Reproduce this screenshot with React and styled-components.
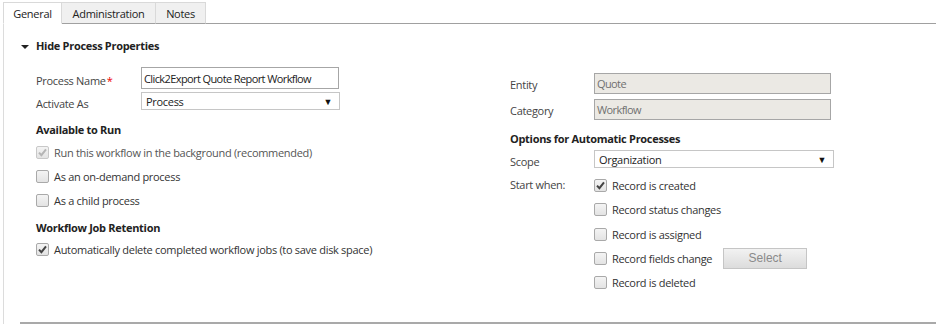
import React from "react";
import styled, { createGlobalStyle } from "styled-components";

const Global = createGlobalStyle`
  html, body { margin: 0; padding: 0; background: #fff; }
  body {
    font-family: "Segoe UI", "Open Sans", sans-serif;
    font-size: 11px;
    letter-spacing: -0.3px;
    color: #444;
  }
  * { box-sizing: border-box; }
`;

const Page = styled.div`
  width: 936px;
  height: 324px;
  position: relative;
  overflow: hidden;
`;

const TabBar = styled.div`
  display: flex;
  align-items: flex-end;
  height: 24px;
  padding-left: 3px;
  padding-top: 2px;
`;

const Tab = styled.div`
  height: 22px;
  display: flex;
  align-items: center;
  justify-content: center;
  color: #222;
  background: ${p => (p.$active ? "#fff" : "#f0f0f0")};
  border: 1px solid #d9d9d9;
  border-left: ${p => (p.$first ? "1px solid #d9d9d9" : "none")};
  border-bottom: ${p => (p.$active ? "1px solid #fff" : "1px solid #a0a0a0")};
  width: ${p => p.$w}px;
`;

const TabFill = styled.div`
  flex: 1;
  height: 1px;
  background: #a0a0a0;
`;

const Body = styled.div`
  border-left: 1px solid #dcdcdc;
  margin-left: 3px;
  height: 300px;
  position: relative;
`;

const SectionHead = styled.div`
  display: flex;
  align-items: center;
  gap: 7px;
  padding: 10px 0 0 17px;
  height: 33px;
  font-weight: bold;
  color: #222;
`;

const Caret = styled.span`
  width: 0;
  height: 0;
  border-left: 4px solid transparent;
  border-right: 4px solid transparent;
  border-top: 4px solid #222;
  margin-top: 2px;
`;

const Columns = styled.div`
  display: grid;
  grid-template-columns: 474px 1fr;
  padding-left: 32px;
`;

const Col = styled.div`
  display: flex;
  flex-direction: column;
  padding-top: ${p => p.$pt}px;
`;

const FieldRow = styled.div`
  display: flex;
  align-items: ${p => p.$align || "center"};
  height: ${p => (p.$h ? `${p.$h}px` : "auto")};
  margin-top: ${p => p.$mt || 0}px;
`;

const Label = styled.div`
  width: ${p => p.$w}px;
  flex: none;
  color: #444;
  padding-top: ${p => p.$pt || 0}px;
`;

const Req = styled.span`
  color: #e00;
  margin-left: 1px;
`;

const TextBox = styled.div`
  width: ${p => p.$w}px;
  height: ${p => p.$h}px;
  margin-top: ${p => p.$mt || 0}px;
  border: 1px solid #a6a6a6;
  background: ${p => (p.$ro ? "#ebe9e4" : "#fff")};
  color: ${p => (p.$ro ? "#707070" : "#222")};
  padding: 0 2px;
  display: flex;
  align-items: center;
  white-space: nowrap;
  overflow: hidden;
  font-size: 11px;
  letter-spacing: -0.6px;
`;

const Select = styled.div`
  width: ${p => p.$w}px;
  height: 18px;
  margin-top: ${p => p.$mt || 0}px;
  border: 1px solid #c6c6c6;
  background: #fff;
  color: #222;
  padding: 0 4px;
  display: flex;
  align-items: center;
  justify-content: space-between;
  font-size: 11px;
`;

const Arrow = styled.span`
  font-size: 9px;
  color: #111;
  margin-right: 3px;
`;

const SubHead = styled.div`
  font-weight: bold;
  color: #222;
  height: 22px;
  margin-top: ${p => p.$mt}px;
  display: flex;
  align-items: center;
`;

const CheckRow = styled.div`
  display: flex;
  align-items: center;
  gap: 5px;
  height: ${p => p.$h || 24}px;
  white-space: nowrap;
  color: ${p => (p.$muted ? "#555" : "#333")};
`;

const Box = styled.span`
  width: 13px;
  height: 13px;
  border: 1px solid ${p => (p.$dis ? "#c8c8c8" : "#a9a9a9")};
  border-radius: 2px;
  background: linear-gradient(#f4f4f4, #e3e3e3);
  display: inline-flex;
  align-items: center;
  justify-content: center;
  flex: none;
`;

const Button = styled.div`
  width: 84px;
  height: 21px;
  margin-left: 6px;
  border: 1px solid #c5c5c5;
  background: linear-gradient(#f2f2f2, #dcdcdc);
  color: #8a8a8a;
  display: flex;
  align-items: center;
  justify-content: center;
  font-family: "Liberation Sans", Arial, sans-serif;
  letter-spacing: 0;
  font-size: 12px;
`;

const BottomLine = styled.div`
  position: absolute;
  left: 16px;
  right: 0;
  bottom: 0;
  height: 2px;
  background: #a9a9a9;
`;

function Check({ checked, disabled }) {
  return (
    <Box $dis={disabled}>
      {checked && (
        <svg width="9" height="9" viewBox="0 0 9 9">
          <path
            d="M1 4.6 L3.4 7.2 L8 1.4"
            fill="none"
            stroke={disabled ? "#b5b5b5" : "#444"}
            strokeWidth="2"
          />
        </svg>
      )}
    </Box>
  );
}

const Item = ({ checked, disabled, children, h, muted }) => (
  <CheckRow $h={h} $muted={muted}>
    <Check checked={checked} disabled={disabled} />
    <span>{children}</span>
  </CheckRow>
);

export default function App() {
  return (
    <Page>
      <Global />
      <TabBar>
        <Tab $active $first $w={59}>General</Tab>
        <Tab $w={94}>Administration</Tab>
        <Tab $w={50}>Notes</Tab>
        <TabFill />
      </TabBar>
      <Body>
        <SectionHead>
          <Caret />
          Hide Process Properties
        </SectionHead>
        <Columns>
          <Col $pt={9}>
            <FieldRow $h={24}>
              <Label $w={105} $pt={4}>Process Name<Req>*</Req></Label>
              <TextBox $w={198} $h={22}>Click2Export Quote Report Workflow</TextBox>
            </FieldRow>
            <FieldRow $h={22}>
              <Label $w={105} $pt={4}>Activate As</Label>
              <Select $w={199}>
                <span>Process</span>
                <Arrow>▼</Arrow>
              </Select>
            </FieldRow>
            <SubHead $mt={6}>Available to Run</SubHead>
            <Item checked disabled muted>Run this workflow in the background (recommended)</Item>
            <Item>As an on-demand process</Item>
            <Item>As a child process</Item>
            <SubHead $mt={4}>Workflow Job Retention</SubHead>
            <Item checked h={22}>Automatically delete completed workflow jobs (to save disk space)</Item>
          </Col>
          <Col $pt={14}>
            <FieldRow $h={26} $align="flex-start">
              <Label $w={84} $pt={6}>Entity</Label>
              <TextBox $ro $w={237} $h={21} $mt={2}>Quote</TextBox>
            </FieldRow>
            <FieldRow $h={26} $align="flex-start">
              <Label $w={84} $pt={6}>Category</Label>
              <TextBox $ro $w={237} $h={21} $mt={2}>Workflow</TextBox>
            </FieldRow>
            <SubHead $mt={4}>Options for Automatic Processes</SubHead>
            <FieldRow $h={22} $align="flex-start">
              <Label $w={84} $pt={5}>Scope</Label>
              <Select $w={240} $mt={1}>
                <span>Organization</span>
                <Arrow>▼</Arrow>
              </Select>
            </FieldRow>
            <FieldRow $align="flex-start" $mt={2}>
              <Label $w={84} $pt={4}>Start when:</Label>
              <div>
                <Item checked h={24}>Record is created</Item>
                <Item h={25}>Record status changes</Item>
                <Item h={24}>Record is assigned</Item>
                <CheckRow $h={24}>
                  <Check />
                  <span>Record fields change</span>
                  <Button>Select</Button>
                </CheckRow>
                <Item h={25}>Record is deleted</Item>
              </div>
            </FieldRow>
          </Col>
        </Columns>
        <BottomLine />
      </Body>
    </Page>
  );
}
